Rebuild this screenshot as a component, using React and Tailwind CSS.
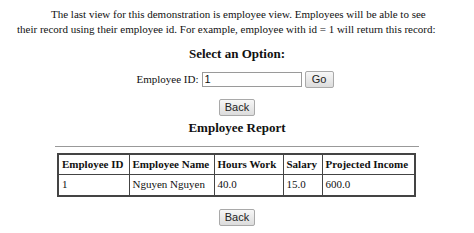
import React from 'react';

const Button = ({ children, className = '' }) => (
  <button
    className={`h-[17px] p-0 border border-[#a9a9a9] rounded-[2px] bg-gradient-to-b from-[#f7f7f7] to-[#dcdcdc] text-[11px] leading-none text-[#222] ${className}`}
    style={{ fontFamily: '"Liberation Sans", Arial, sans-serif' }}
  >
    {children}
  </button>
);

const rows = [
  { id: '1', name: 'Nguyen Nguyen', hours: '40.0', salary: '15.0', income: '600.0' },
];

const App = () => {
  return (
    <div
      className="w-[474px] h-[233px] bg-white text-[#111] overflow-hidden"
      style={{ fontFamily: '"Liberation Serif", "Times New Roman", serif' }}
    >
      <p className="pl-[17px] pr-[36px] pt-[7px] text-[11px] leading-[14.5px] indent-[34px]">
        The last view for this demonstration is employee view. Employees will be able to see
        their record using their employee id. For example, employee with id = 1 will return this record:
      </p>

      <h2 className="mt-[9.5px] text-center text-[13px] leading-[16px] font-bold">Select an Option:</h2>

      <div className="mt-[9px] flex items-center justify-center gap-[3px] pr-[4px]">
        <span className="text-[11px]">Employee ID:</span>
        <input
          defaultValue="1"
          className="w-[100px] h-[15px] border border-[#9a9a9a] px-[2px] text-[11px] outline-none"
          style={{ fontFamily: '"Liberation Sans", Arial, sans-serif' }}
        />
        <Button className="w-[29px] h-[16px]">Go</Button>
      </div>

      <div className="mt-[11px] flex justify-center">
        <Button className="w-[36px]">Back</Button>
      </div>

      <h2 className="mt-[4px] text-center text-[13px] leading-[16px] font-bold">Employee Report</h2>

      <div className="mx-[55px] mt-[10px] border-t border-[#999]" />

      <table className="ml-[57px] mt-[6px] border-collapse border-2 border-[#444] text-[11px] leading-[13px]">
        <thead>
          <tr className="h-[21px]">
            <th className="w-[71px] border border-[#444] px-[3px] text-left whitespace-nowrap">Employee ID</th>
            <th className="w-[85px] border border-[#444] px-[3px] text-left whitespace-nowrap">Employee Name</th>
            <th className="w-[69px] border border-[#444] px-[3px] text-left whitespace-nowrap">Hours Work</th>
            <th className="w-[39px] border border-[#444] px-[3px] text-left whitespace-nowrap">Salary</th>
            <th className="w-[93px] border border-[#444] px-[3px] text-left whitespace-nowrap">Projected Income</th>
          </tr>
        </thead>
        <tbody>
          {rows.map((r) => (
            <tr key={r.id} className="h-[21px]">
              <td className="border border-[#444] px-[3px] whitespace-nowrap">{r.id}</td>
              <td className="border border-[#444] px-[3px] whitespace-nowrap">{r.name}</td>
              <td className="border border-[#444] px-[3px] whitespace-nowrap">{r.hours}</td>
              <td className="border border-[#444] px-[3px] whitespace-nowrap">{r.salary}</td>
              <td className="border border-[#444] px-[3px] whitespace-nowrap">{r.income}</td>
            </tr>
          ))}
        </tbody>
      </table>

      <div className="mt-[12px] flex justify-center">
        <Button className="w-[36px]">Back</Button>
      </div>
    </div>
  );
};

export default App;
